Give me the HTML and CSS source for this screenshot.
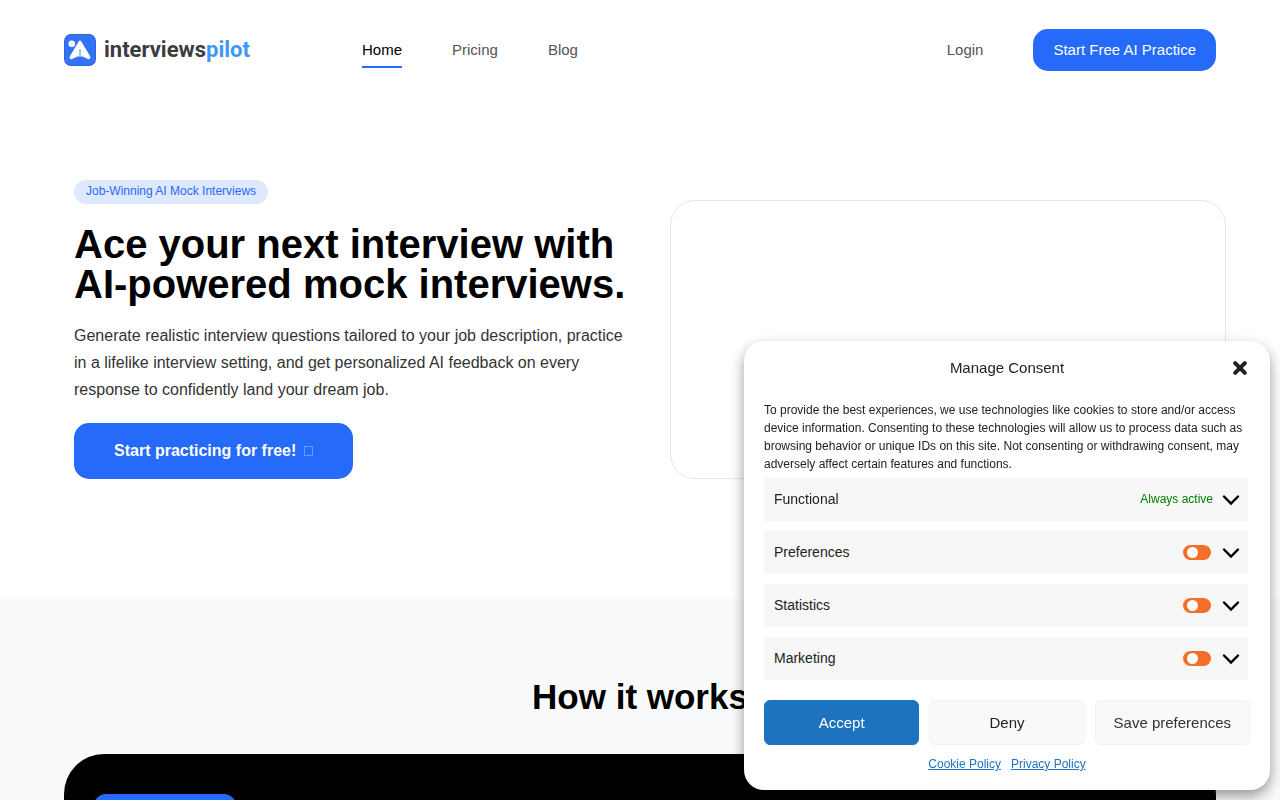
FILE: index.html
```html
<!DOCTYPE html>
<html lang="en">
<head>
    <meta charset="UTF-8">
    <meta name="viewport" content="width=device-width, initial-scale=1.0">
    <title>InterviewsPilot</title>
    <link rel="stylesheet" href="styles.css">
</head>
<body>
    <header class="header">
        <a class="logo" href="#">
            <svg width="32" height="32" viewBox="0 0 32 32" aria-hidden="true">
                <rect width="32" height="32" rx="7" fill="#2c66e0"/>
                <rect x="1" y="1" width="30" height="30" rx="6" fill="#3572f6"/>
                <circle cx="7.800" cy="9.800" r="3.300" fill="#fff"/>
                <path d="M17.300 7.600 L26 22 Q27.200 25.800 24 25 L18.600 22.400 H13.400 L8 25 Q4.800 25.800 6 22 L14.700 7.600 Q16 5.600 17.300 7.600 Z" fill="#fff"/>
                <path d="M16 15 V22.400" stroke="#3572f6" stroke-width="0.900"/>
            </svg>
            <span class="logo-text">interviews<span class="logo-accent">pilot</span></span>
        </a>
        <nav class="nav">
            <a class="active" href="#">Home</a>
            <a href="#">Pricing</a>
            <a href="#">Blog</a>
        </nav>
        <a class="login" href="#">Login</a>
        <a class="btn-start" href="#">Start Free AI Practice</a>
    </header>

    <section class="hero">
        <div class="hero-text">
            <span class="tag">Job-Winning AI Mock Interviews</span>
            <h1>Ace your next interview with AI-powered mock interviews.</h1>
            <p>Generate realistic interview questions tailored to your job description, practice in a lifelike interview setting, and get personalized AI feedback on every response to confidently land your dream job.</p>
            <a class="btn-practice" href="#">Start practicing for free! <span class="btn-icon"></span></a>
        </div>
        <div class="hero-video"></div>
    </section>

    <section class="how">
        <h2>How it works</h2>
        <div class="how-card">
            <div class="how-badge"></div>
        </div>
    </section>

    <!-- Cookie consent -->
    <div class="consent" role="dialog" aria-labelledby="consentTitle">
        <div class="consent-header">
            <div class="consent-title" id="consentTitle">Manage Consent</div>
            <button class="consent-close" type="button" aria-label="Close">
                <svg width="14" height="14" viewBox="0 0 14 14"><path d="M2.200 2.200 L11.800 11.800 M11.800 2.200 L2.200 11.800" stroke="#222" stroke-width="4" stroke-linecap="round"/></svg>
            </button>
        </div>
        <p class="consent-text">To provide the best experiences, we use technologies like cookies to store and/or access device information. Consenting to these technologies will allow us to process data such as browsing behavior or unique IDs on this site. Not consenting or withdrawing consent, may adversely affect certain features and functions.</p>
        <div class="categories">
            <details>
                <summary>
                    <span class="category-name">Functional</span>
                    <span class="always-active">Always active</span>
                    <svg class="chevron" width="18" height="12" viewBox="0 0 18 12"><path d="M2 2.500 L9 9.500 L16 2.500" fill="none" stroke="#000" stroke-width="2.400" stroke-linecap="round"/></svg>
                </summary>
            </details>
            <details>
                <summary>
                    <label class="category-name" for="preferences">Preferences</label>
                    <input class="toggle" type="checkbox" id="preferences">
                    <svg class="chevron" width="18" height="12" viewBox="0 0 18 12"><path d="M2 2.500 L9 9.500 L16 2.500" fill="none" stroke="#000" stroke-width="2.400" stroke-linecap="round"/></svg>
                </summary>
            </details>
            <details>
                <summary>
                    <label class="category-name" for="statistics">Statistics</label>
                    <input class="toggle" type="checkbox" id="statistics">
                    <svg class="chevron" width="18" height="12" viewBox="0 0 18 12"><path d="M2 2.500 L9 9.500 L16 2.500" fill="none" stroke="#000" stroke-width="2.400" stroke-linecap="round"/></svg>
                </summary>
            </details>
            <details>
                <summary>
                    <label class="category-name" for="marketing">Marketing</label>
                    <input class="toggle" type="checkbox" id="marketing">
                    <svg class="chevron" width="18" height="12" viewBox="0 0 18 12"><path d="M2 2.500 L9 9.500 L16 2.500" fill="none" stroke="#000" stroke-width="2.400" stroke-linecap="round"/></svg>
                </summary>
            </details>
        </div>
        <div class="consent-buttons">
            <button class="accept" type="button">Accept</button>
            <button type="button">Deny</button>
            <button class="save" type="button">Save preferences</button>
        </div>
        <div class="consent-links">
            <a href="#">Cookie Policy</a>
            <a href="#">Privacy Policy</a>
        </div>
    </div>
</body>
</html>
```

FILE: styles.css
```css
* {
    box-sizing: border-box;
}
body {
    font-family: "Liberation Sans", Arial, sans-serif;
    margin: 0;
    background-color: #fff;
    color: #000;
}
a {
    text-decoration: none;
}
.header {
    display: flex;
    align-items: center;
    height: 100px;
    padding: 0 64px;
    font-size: 15px;
    line-height: 18px;
}
.logo {
    display: flex;
    align-items: center;
    gap: 8px;
    width: 298px;
}
.logo-text {
    font-family: Roboto, sans-serif;
    font-size: 22px;
    font-weight: 700;
    color: #3c3c3e;
}
.logo-accent {
    color: #3f97fb;
}
.nav {
    display: flex;
    gap: 50px;
    flex: 1;
}
.nav a {
    padding: 9px 0 7px;
    border-bottom: 2px solid transparent;
    color: #555;
}
.nav a.active {
    color: #000;
    border-color: #256af8;
}
.login {
    color: #555;
    margin-right: 50px;
}
.btn-start {
    background-color: #256af8;
    color: #fff;
    padding: 12px 20px;
    border-radius: 15px;
}
.hero {
    display: grid;
    grid-template-columns: 1fr 1fr;
    gap: 40px;
    align-items: end;
    padding: 80px 54px 120px 74px;
}
.hero-text {
    display: flex;
    flex-direction: column;
    align-items: flex-start;
}
.tag {
    background-color: #dee8fe;
    color: #256af8;
    font-size: 12px;
    line-height: 22px;
    padding: 0 12px 2px;
    border-radius: 12px;
}
h1 {
    font-size: 40px;
    line-height: 40px;
    margin: 20px 0 18px;
}
.hero-text p {
    font-size: 16px;
    line-height: 27px;
    color: #333;
    margin: 0 0 20px;
}
.btn-practice {
    display: flex;
    align-items: center;
    gap: 8px;
    background-color: #256af8;
    color: #fff;
    font-size: 16px;
    font-weight: 700;
    line-height: 56px;
    padding: 0 40px;
    border-radius: 15px;
}
.btn-icon {
    width: 9px;
    height: 10px;
    border: 1px solid #6b9afa;
}
.hero-video {
    height: 279px;
    border: 1px solid #e5e5e5;
    border-radius: 25px;
}
.how {
    background-color: #f9fafc;
    padding: 78px 64px 80px;
}
h2 {
    font-size: 35px;
    line-height: 40px;
    text-align: center;
    margin: 0 0 37px;
}
.how-card {
    background-color: #000;
    border-radius: 40px;
    padding: 40px 30px;
    min-height: 400px;
}
.how-badge {
    width: 142px;
    height: 36px;
    border-radius: 12px;
    background-color: #256af8;
}

/* Cookie consent */
.consent {
    position: fixed;
    right: 10px;
    bottom: 10px;
    width: 526px;
    max-width: calc(100% - 20px);
    padding: 15px 20px;
    background-color: #fff;
    color: #222;
    border-radius: 20px;
    box-shadow: 0 6px 14px rgba(0, 0, 0, 0.4);
}
.consent-header {
    display: grid;
    grid-template-columns: 1fr auto 1fr;
    align-items: center;
    height: 24px;
    margin-bottom: 21px;
}
.consent-title {
    grid-column: 2;
    font-size: 15px;
    line-height: 18px;
}
.consent-close {
    justify-self: end;
    display: flex;
    padding: 0 3px;
    border: none;
    background: none;
    cursor: pointer;
}
.consent-text {
    font-size: 12px;
    line-height: 18px;
    margin: 0 0 5px;
}
.categories {
    display: grid;
    gap: 10px;
    margin: 0 2px 20px 0;
}
.categories summary {
    display: flex;
    align-items: center;
    height: 43px;
    padding: 0 8px 0 10px;
    background-color: #f7f7f7;
    cursor: pointer;
}
.category-name {
    flex: 1;
    font-size: 14px;
    padding-bottom: 2px;
}
.always-active {
    color: green;
    font-size: 12px;
    padding-bottom: 2px;
}
.chevron {
    margin-left: 9px;
}
.toggle {
    appearance: none;
    width: 28px;
    height: 15px;
    margin: 0 2px 0 0;
    padding: 2px 4px;
    border-radius: 8px;
    background-color: #f56e28;
    cursor: pointer;
}
.toggle::before {
    content: "";
    display: block;
    width: 11px;
    height: 11px;
    border-radius: 50%;
    background-color: #fff;
}
.toggle:checked {
    background-color: #1e73be;
}
.consent-buttons {
    display: grid;
    grid-template-columns: repeat(3, 1fr);
    gap: 10px;
}
.consent-buttons button {
    height: 45px;
    border: 1px solid #f2f2f2;
    border-radius: 6px;
    background-color: #f9f9f9;
    color: #222;
    font-family: inherit;
    font-size: 15px;
    cursor: pointer;
}
.consent-buttons .accept {
    background-color: #1e73be;
    border-color: #1e73be;
    color: #fff;
}
.consent-buttons .save {
    color: #333;
}
.consent-links {
    display: flex;
    justify-content: center;
    gap: 10px;
    margin-top: 10px;
    font-size: 12px;
    line-height: 18px;
    padding-bottom: 2px;
}
.consent-links a {
    color: #1e73be;
    text-decoration: underline;
}
```
